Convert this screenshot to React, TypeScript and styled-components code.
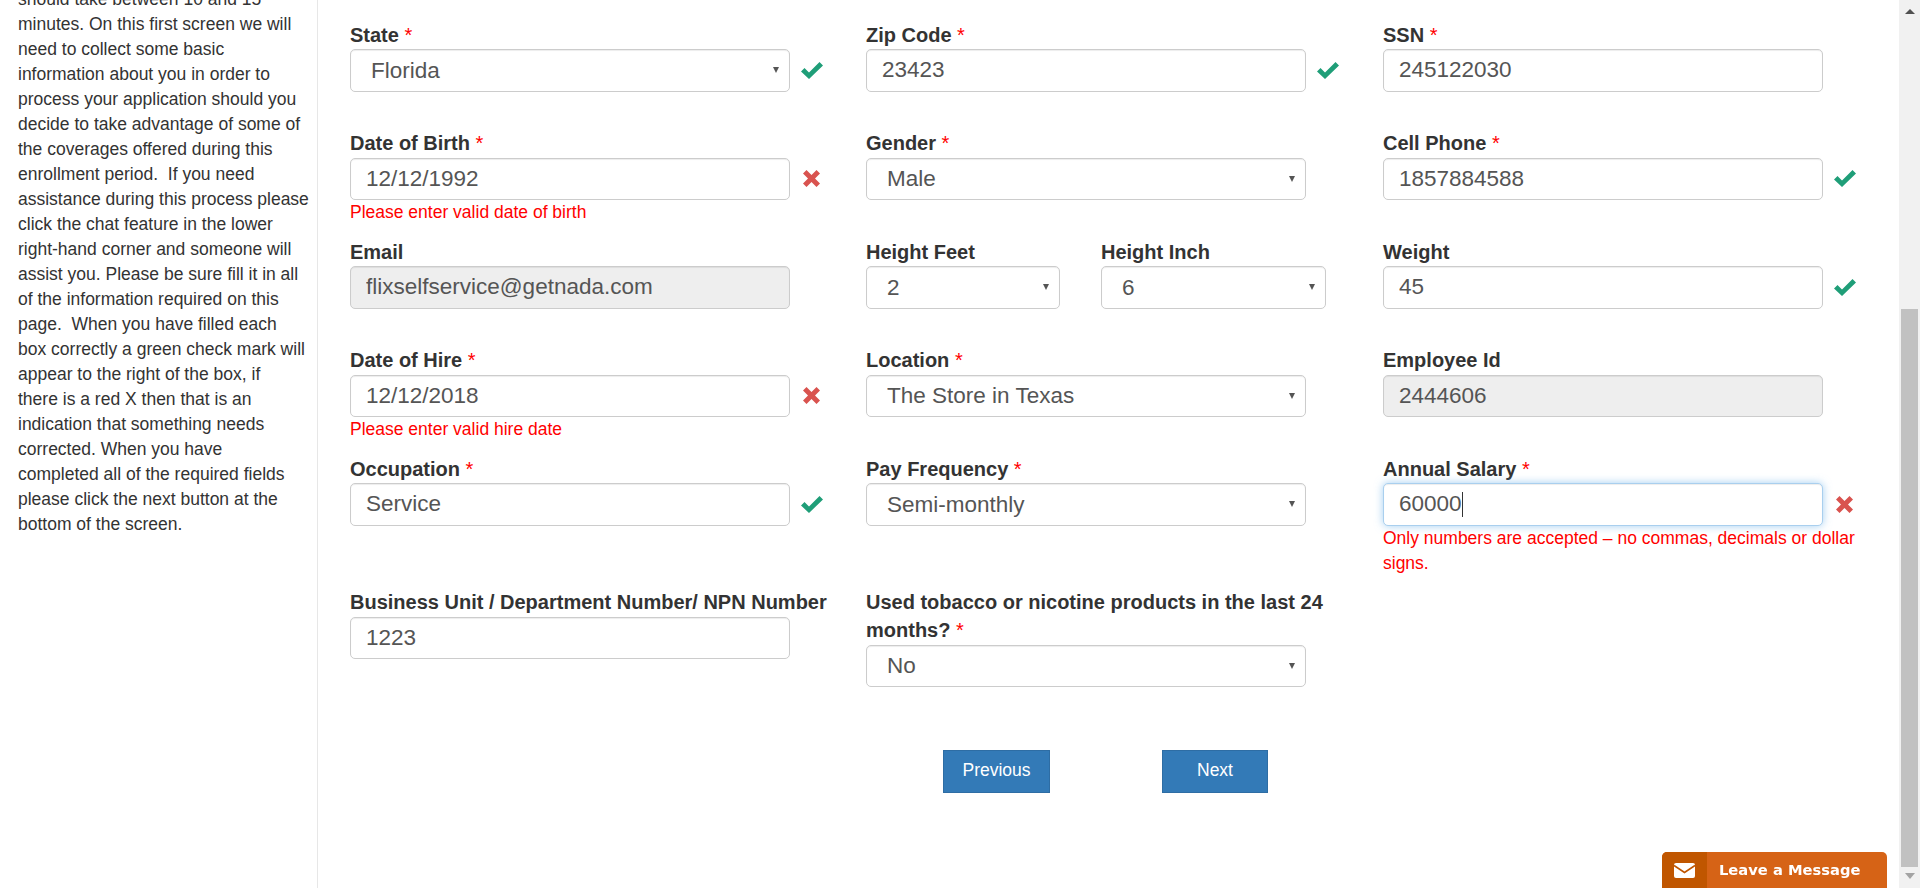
import styled, {createGlobalStyle} from 'styled-components';

const GlobalStyle = createGlobalStyle`
  html, body {
    margin: 0;
    padding: 0;
    height: 100%;
    overflow: hidden;
    background: #fff;
  }
  body {
    font-family: "Liberation Sans", Arial, sans-serif;
    font-size: 17.5px;
    line-height: 25px;
    color: #333;
  }
  * {
    box-sizing: border-box;
  }
`;

const introLines = [
  'should take between 10 and 15',
  'minutes. On this first screen we will',
  'need to collect some basic',
  'information about you in order to',
  'process your application should you',
  'decide to take advantage of some of',
  'the coverages offered during this',
  'enrollment period.\u00a0 If you need',
  'assistance during this process please',
  'click the chat feature in the lower',
  'right-hand corner and someone will',
  'assist you. Please be sure fill it in all',
  'of the information required on this',
  'page.\u00a0 When you have filled each',
  'box correctly a green check mark will',
  'appear to the right of the box, if',
  'there is a red X then that is an',
  'indication that something needs',
  'corrected. When you have',
  'completed all of the required fields',
  'please click the next button at the',
  'bottom of the screen.',
];

type Status = 'ok' | 'bad';

function StatusIcon({status}: {status: Status}) {
  if (status === 'ok') {
    return (
      <CheckMark viewBox="0 0 22 17" width="22" height="17">
        <path d="M0 9.5 3.5 6 8 10.5 18.5 0 22 3.5 8 17Z" fill="#1f9e78" />
      </CheckMark>
    );
  }
  return (
    <CrossMark viewBox="0 0 17 17" width="17" height="17">
      <path
        d="M3.5 0 8.5 5 13.5 0 17 3.5 12 8.5 17 13.5 13.5 17 8.5 12 3.5 17 0 13.5 5 8.5 0 3.5Z"
        fill="#d9534f"
      />
    </CrossMark>
  );
}

interface FieldProps {
  label: string;
  required?: boolean;
  status?: Status;
  error?: string;
  value: string;
  select?: boolean;
  disabled?: boolean;
  focused?: boolean;
  width?: number;
}

function Field({
  label,
  required,
  status,
  error,
  value,
  select,
  disabled,
  focused,
  width = 440,
}: FieldProps) {
  return (
    <FieldBox>
      <Label>
        {label}
        {required && <Star> *</Star>}
      </Label>
      <Control>
        {select ? (
          <>
            <SelectBox $width={width} defaultValue={value}>
              <option>{value}</option>
            </SelectBox>
            <SelectArrow $left={width - 17} />
          </>
        ) : (
          <InputBox
            $width={width}
            $focused={focused}
            defaultValue={value}
            disabled={disabled}
          />
        )}
        {focused && <Caret />}
        {status && <StatusIcon status={status} />}
      </Control>
      {error && <ErrorText>{error}</ErrorText>}
    </FieldBox>
  );
}

function App() {
  return (
    <>
      <GlobalStyle />
      <Page>
        <Sidebar>
          <IntroText>
            {introLines.map(line => (
              <IntroLine key={line}>{line}</IntroLine>
            ))}
          </IntroText>
        </Sidebar>
        <Main>
          <FormGrid>
            <Field label="State" required select value="Florida" status="ok" />
            <Field label="Zip Code" required value="23423" status="ok" />
            <Field label="SSN" required value="245122030" />

            <Field
              label="Date of Birth"
              required
              value="12/12/1992"
              status="bad"
              error="Please enter valid date of birth"
            />
            <Field label="Gender" required select value="Male" />
            <Field label="Cell Phone" required value="1857884588" status="ok" />

            <Field label="Email" value="flixselfservice@getnada.com" disabled />
            <HeightPair>
              <Field label="Height Feet" select value="2" width={194} />
              <Field label="Height Inch" select value="6" width={225} />
            </HeightPair>
            <Field label="Weight" value="45" status="ok" />

            <Field
              label="Date of Hire"
              required
              value="12/12/2018"
              status="bad"
              error="Please enter valid hire date"
            />
            <Field label="Location" required select value="The Store in Texas" />
            <Field label="Employee Id" value="2444606" disabled />

            <Field label="Occupation" required value="Service" status="ok" />
            <Field label="Pay Frequency" required select value="Semi-monthly" />
            <Field
              label="Annual Salary"
              required
              value="60000"
              status="bad"
              focused
              error="Only numbers are accepted – no commas, decimals or dollar signs."
            />

            <Field label="Business Unit / Department Number/ NPN Number" value="1223" />
            <Field
              label="Used tobacco or nicotine products in the last 24 months?"
              required
              select
              value="No"
            />
          </FormGrid>
          <ButtonRow>
            <NavButton type="button" $width={107}>
              Previous
            </NavButton>
            <NavButton type="button" $width={106}>
              Next
            </NavButton>
          </ButtonRow>
        </Main>
        <ScrollTrack>
          <ArrowUp />
          <ScrollThumb />
          <ArrowDown />
        </ScrollTrack>
      </Page>
      <MessageTab>
        <MessageIcon>
          <svg viewBox="0 0 21 15" width="21" height="15">
            <rect width="21" height="15" rx="2" fill="#fff" />
            <path d="M0 2.5 10.5 9.5 21 2.5" fill="none" stroke="#c05600" strokeWidth="1.6" />
          </svg>
        </MessageIcon>
        <MessageLabel>Leave a Message</MessageLabel>
      </MessageTab>
    </>
  );
}

const Page = styled.div`
  display: flex;
  height: 888px;
  overflow: hidden;
`;

const Sidebar = styled.aside`
  width: 318px;
  flex: none;
  padding: 0 0 0 18px;
  border-right: 1px solid #e7e7e7;
  overflow: hidden;
`;

const IntroText = styled.div`
  margin: -13px 0 0;
`;

const IntroLine = styled.div`
  white-space: nowrap;
`;

const Main = styled.main`
  flex: 1;
  padding: 20.5px 0 0 32px;
`;

const FormGrid = styled.div`
  display: grid;
  grid-template-columns: 516px 517px 516px;
  row-gap: 12.5px;
`;

const FieldBox = styled.div`
  min-height: 96px;
`;

const HeightPair = styled.div`
  display: grid;
  grid-template-columns: 235px 235px;
`;

const Label = styled.label`
  display: block;
  max-width: 486px;
  margin-bottom: 0.5px;
  font-size: 20px;
  line-height: 28px;
  font-weight: 700;
  color: #333;
`;

const Star = styled.span`
  color: #f00;
  font-weight: 400;
`;

const Control = styled.div`
  display: flex;
  align-items: center;
  gap: 11px;
  position: relative;
`;

const InputBox = styled.input<{$width: number; $focused?: boolean}>`
  width: ${({$width}) => $width}px;
  height: 42.5px;
  padding: 7.5px 15px;
  font-family: inherit;
  font-size: 22.5px;
  color: #555;
  background: #fff;
  border: 1px solid ${({$focused}) => ($focused ? '#a9cfee' : '#ccc')};
  border-radius: 5px;
  outline: none;
  box-shadow: ${({$focused}) =>
    $focused
      ? 'inset 0 1px 1px rgba(0,0,0,.075), 0 0 8px rgba(102,175,233,.6)'
      : 'inset 0 1px 1px rgba(0,0,0,.075)'};

  &:disabled {
    background: #eee;
    opacity: 1;
    -webkit-text-fill-color: #555;
  }
`;

const SelectBox = styled.select<{$width: number}>`
  width: ${({$width}) => $width}px;
  height: 42.5px;
  padding: 7.5px 15px 7.5px 20px;
  appearance: none;
  font-family: inherit;
  font-size: 22.5px;
  color: #555;
  background: #fff;
  border: 1px solid #ccc;
  border-radius: 5px;
  outline: none;
  box-shadow: inset 0 1px 1px rgba(0, 0, 0, 0.075);
`;

const SelectArrow = styled.span<{$left: number}>`
  position: absolute;
  left: ${({$left}) => $left}px;
  top: 18px;
  width: 0;
  height: 0;
  border-left: 3.5px solid transparent;
  border-right: 3.5px solid transparent;
  border-top: 6px solid #555;
  pointer-events: none;
`;

const Caret = styled.span`
  position: absolute;
  left: 79px;
  top: 9px;
  width: 1px;
  height: 25px;
  background: #333;
`;

const CheckMark = styled.svg`
  flex: none;
`;

const CrossMark = styled.svg`
  flex: none;
  margin-left: 2px;
`;

const ErrorText = styled.div`
  max-width: 490px;
  font-size: 17.5px;
  line-height: 25px;
  color: #f00;
`;

const ButtonRow = styled.div`
  display: flex;
  gap: 112px;
  margin: 63px 0 0 593px;
`;

const NavButton = styled.button<{$width: number}>`
  width: ${({$width}) => $width}px;
  height: 42.5px;
  padding: 0 0 1px;
  font-family: inherit;
  font-size: 17.5px;
  color: #fff;
  background: #337ab7;
  border: 1px solid #2e6da4;
`;

const ScrollTrack = styled.div`
  width: 21px;
  flex: none;
  display: flex;
  flex-direction: column;
  align-items: center;
  padding-top: 9px;
  background: #f1f1f1;
`;

const ArrowUp = styled.div`
  width: 0;
  height: 0;
  border-left: 5px solid transparent;
  border-right: 5px solid transparent;
  border-bottom: 5px solid #505050;
`;

const ArrowDown = styled.div`
  width: 0;
  height: 0;
  margin-top: 6px;
  border-left: 5px solid transparent;
  border-right: 5px solid transparent;
  border-top: 6px solid #a3a3a3;
`;

const ScrollThumb = styled.div`
  width: 17px;
  height: 558px;
  margin-top: 295px;
  background: #c1c1c1;
`;

const MessageTab = styled.div`
  position: fixed;
  left: 1662px;
  bottom: 0;
  width: 225px;
  height: 36px;
  display: flex;
  border-radius: 5px 5px 0 0;
  overflow: hidden;
  background: #d66316;
`;

const MessageIcon = styled.div`
  width: 45px;
  display: flex;
  align-items: center;
  justify-content: center;
  background: #c05600;
`;

const MessageLabel = styled.div`
  padding-left: 12px;
  font-family: "DejaVu Sans", Verdana, sans-serif;
  font-size: 14.7px;
  font-weight: 700;
  line-height: 36px;
  color: #fff;
`;

export default App;
